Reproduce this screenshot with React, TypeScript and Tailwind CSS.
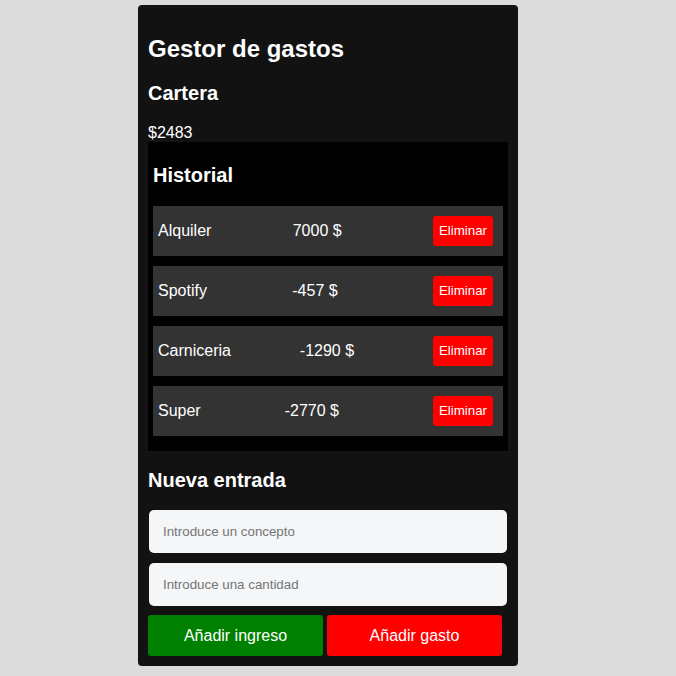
import React from "react";

type Entry = { concept: string; amount: number };

const entries: Entry[] = [
  { concept: "Alquiler", amount: 7000 },
  { concept: "Spotify", amount: -457 },
  { concept: "Carniceria", amount: -1290 },
  { concept: "Super", amount: -2770 },
];

const EntryRow = ({ entry }: { entry: Entry }) => {
  return (
    <div className="flex h-[50px] items-center justify-between bg-[#333333] pl-[5px] pr-[10px] text-[16px] text-white">
      <span>{entry.concept}</span>
      <span className="mr-[10px]">{entry.amount} $</span>
      <button className="h-[30px] w-[60px] rounded-[3px] bg-[#ff0000] text-[13.33px] text-white">
        Eliminar
      </button>
    </div>
  );
};

export default function App() {
  return (
    <div className="min-h-screen bg-[#dcdcdc] pt-[5px] font-['Liberation_Sans',Arial,sans-serif]">
      <div className="ml-[138px] w-[380px] rounded-[4px] bg-[#121212] px-[10px] pb-[10px] pt-[30px] text-white">
        <h1 className="text-[24px] font-bold leading-[28px]">Gestor de gastos</h1>

        <h2 className="mt-[19px] text-[20px] font-bold leading-[23px]">Cartera</h2>
        <p className="mt-[19px] text-[16px] leading-[18px]">$2483</p>

        <div className="bg-black px-[5px] pb-[15px] pt-[22px]">
          <h2 className="text-[20px] font-bold leading-[23px]">Historial</h2>
          <div className="mt-[19px] flex flex-col gap-[10px]">
            {entries.map((entry) => (
              <EntryRow key={entry.concept} entry={entry} />
            ))}
          </div>
        </div>

        <h2 className="mt-[18px] text-[20px] font-bold leading-[23px]">Nueva entrada</h2>

        <div className="mt-[18px] flex flex-col gap-[10px]">
          <input
            type="text"
            placeholder="Introduce un concepto"
            className="mx-px h-[43px] w-[358px] rounded-[5px] bg-[#f4f6f8] px-[14px] text-[13.33px] text-black placeholder:text-[#757575] outline-none"
          />
          <input
            type="text"
            placeholder="Introduce una cantidad"
            className="mx-px h-[43px] w-[358px] rounded-[5px] bg-[#f4f6f8] px-[14px] text-[13.33px] text-black placeholder:text-[#757575] outline-none"
          />
        </div>

        <div className="mt-[9px] flex gap-[4px]">
          <button className="h-[41px] w-[175px] rounded-[3px] bg-[#008000] text-[16px] text-white">
            Añadir ingreso
          </button>
          <button className="h-[41px] w-[175px] rounded-[3px] bg-[#ff0000] text-[16px] text-white">
            Añadir gasto
          </button>
        </div>
      </div>
    </div>
  );
}
